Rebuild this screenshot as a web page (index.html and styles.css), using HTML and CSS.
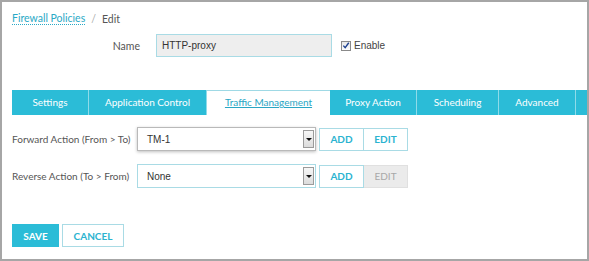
FILE: index.html
```html
<!DOCTYPE html>
<html lang="en">
<head>
  <meta charset="UTF-8" />
  <title>Firewall Policies - Edit</title>
  <link rel="stylesheet" href="styles.css">
</head>
<body>
  <div class="panel">
    <div class="crumbs">
      <a href="#" class="crumb-link">Firewall Policies</a>
      <span class="crumb-sep">/</span>
      <span class="crumb-current">Edit</span>
    </div>

    <div class="name-row">
      <label class="name-label">Name</label>
      <input type="text" class="name-input" value="HTTP-proxy" readonly>
      <label class="enable">
        <span class="checkbox">
          <svg width="9" height="9" viewBox="0 0 9 9"><path d="M1.5 4.6 L3.6 7 L7.6 1.4" fill="none" stroke="#1b3f8f" stroke-width="1.5"/></svg>
        </span>
        Enable
      </label>
    </div>

    <nav class="tabs">
      <a href="#" class="tab t-settings">Settings</a>
      <a href="#" class="tab t-app">Application Control</a>
      <a href="#" class="tab t-traffic active">Traffic Management</a>
      <a href="#" class="tab t-proxy">Proxy Action</a>
      <a href="#" class="tab t-sched">Scheduling</a>
      <a href="#" class="tab t-adv">Advanced</a>
      <a href="#" class="tab t-more"></a>
    </nav>

    <div class="action-row">
      <label class="action-label">Forward Action (From &gt; To)</label>
      <div class="select focused">
        <span class="select-value">TM-1</span>
        <span class="select-arrow"></span>
      </div>
      <div class="btn-group">
        <button class="btn-outline">ADD</button>
        <button class="btn-outline">EDIT</button>
      </div>
    </div>

    <div class="action-row">
      <label class="action-label">Reverse Action (To &gt; From)</label>
      <div class="select">
        <span class="select-value">None</span>
        <span class="select-arrow"></span>
      </div>
      <div class="btn-group">
        <button class="btn-outline">ADD</button>
        <button class="btn-outline disabled">EDIT</button>
      </div>
    </div>

    <div class="footer-actions">
      <button class="btn-save">SAVE</button>
      <button class="btn-cancel">CANCEL</button>
    </div>
  </div>
</body>
</html>
```

FILE: styles.css
```css
* {
  margin: 0;
  padding: 0;
  box-sizing: border-box;
}

body {
  font-family: 'Lato', 'Open Sans', sans-serif;
  background: #fff;
  color: #555;
}

.panel {
  width: 589px;
  height: 261px;
  border: 2px solid #a6a6a6;
  padding: 9px 0 0 10px;
  overflow: hidden;
}

/* breadcrumb */
.crumbs {
  font-size: 10.5px;
  height: 14px;
  line-height: 14px;
  display: flex;
  gap: 6px;
  color: #555;
  padding-top: 1px;
}

.crumb-link {
  color: #2aa9c6;
  text-decoration: none;
  border-bottom: 1px dotted #2aa9c6;
  line-height: 12px;
}

.crumb-sep {
  color: #aaa;
}

/* name */
.name-row {
  display: flex;
  align-items: center;
  margin-top: 9px;
  height: 23px;
}

.name-label {
  width: 144px;
  padding-right: 16px;
  text-align: right;
  font-size: 10.5px;
  color: #555;
}

.name-input {
  width: 176px;
  height: 23px;
  border: 1px solid #a9dbe5;
  background: #eeeeee;
  font-family: 'Liberation Sans', Arial, sans-serif;
  font-size: 10px;
  color: #333;
  padding: 0 5px;
  outline: none;
}

.enable {
  display: flex;
  align-items: center;
  margin-left: 9px;
  font-family: 'Liberation Sans', Arial, sans-serif;
  font-size: 10px;
  color: #444;
  gap: 3px;
}

.checkbox {
  width: 10px;
  height: 10px;
  border: 1px solid #8a8a8a;
  background: linear-gradient(#e8e8e8, #fdfdfd);
  display: flex;
  align-items: center;
  justify-content: center;
}

/* tabs */
.tabs {
  display: flex;
  margin-top: 33px;
  height: 25px;
  width: 600px;
}

.tab {
  height: 25px;
  line-height: 25px;
  background: #2bbcd7;
  color: #fff;
  font-size: 10px;
  text-align: center;
  text-decoration: none;
  border-right: 1px solid #8fdbe9;
  flex-shrink: 0;
}

.t-settings { width: 77px; }
.t-app { width: 118px; }
.t-traffic { width: 123px; }
.t-proxy { width: 87px; }
.t-sched { width: 82px; }
.t-adv { width: 77px; }
.t-more { width: 40px; border-right: none; }

.tab.active {
  background: #fff;
  color: #2aa6c4;
  text-decoration: underline;
  border-top: 1px solid #9fd9e5;
  border-right: none;
  line-height: 23px;
}

/* forward / reverse rows */
.action-row {
  display: flex;
  align-items: center;
  height: 24px;
}

.tabs + .action-row {
  margin-top: 12px;
}

.action-row + .action-row {
  margin-top: 13px;
}

.action-label {
  width: 125px;
  font-size: 10px;
  color: #555;
}

.select {
  width: 179px;
  height: 24px;
  border: 1px solid #a9dbe5;
  background: #fff;
  display: flex;
  align-items: center;
  justify-content: space-between;
  padding: 0 1px 0 9px;
}

.select.focused {
  border-color: #b9b9b9;
  box-shadow: 0 1px 3px rgba(0, 0, 0, 0.25);
}

.select-value {
  font-family: 'Liberation Sans', Arial, sans-serif;
  font-size: 10px;
  color: #333;
}

.select-arrow {
  width: 11px;
  height: 18px;
  border: 1px solid #9b9b9b;
  background: linear-gradient(#f7f7f7, #dcdcdc);
  position: relative;
}

.select-arrow::after {
  content: '';
  position: absolute;
  left: 2px;
  top: 7px;
  border-left: 3px solid transparent;
  border-right: 3px solid transparent;
  border-top: 3px solid #111;
}

.btn-group {
  display: flex;
  margin-left: 3px;
}

.btn-outline {
  height: 23px;
  width: 45px;
  border: 1px solid #a9dbe5;
  background: #fff;
  color: #2bb3d0;
  font-family: 'Lato', 'Open Sans', sans-serif;
  font-weight: bold;
  font-size: 10px;
}

.btn-outline + .btn-outline {
  border-left: none;
  width: 44px;
}

.btn-outline.disabled {
  background: #ebebeb;
  color: #a8a8a8;
  border-color: #e0e0e0;
  font-weight: normal;
}

/* save / cancel */
.footer-actions {
  display: flex;
  gap: 3px;
  margin-top: 36px;
}

.btn-save {
  width: 47px;
  height: 23px;
  background: #2bbcd7;
  border: none;
  color: #fff;
  font-family: 'Lato', 'Open Sans', sans-serif;
  font-weight: bold;
  font-size: 10px;
}

.btn-cancel {
  width: 62px;
  height: 23px;
  background: #fff;
  border: 1px solid #a9dbe5;
  color: #2bb3d0;
  font-family: 'Lato', 'Open Sans', sans-serif;
  font-weight: bold;
  font-size: 10px;
}
```
